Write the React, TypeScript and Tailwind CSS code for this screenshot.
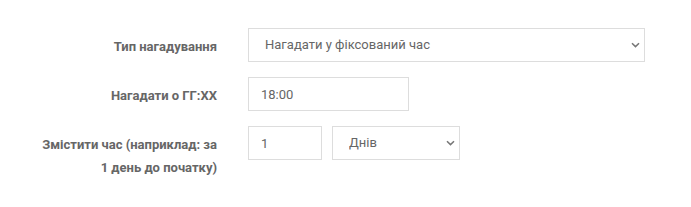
import { useState } from 'react'

function Chevron() {
  return (
    <svg
      width="9"
      height="6"
      viewBox="0 0 9 6"
      className="pointer-events-none absolute right-[5px] top-1/2 -translate-y-1/2"
      fill="none"
    >
      <path d="M1 1.2 4.5 4.6 8 1.2" stroke="#777" strokeWidth="1.5" />
    </svg>
  )
}

type SelectProps = {
  value: string
  options: string[]
  onChange: (v: string) => void
  className: string
}

function Select({ value, options, onChange, className }: SelectProps) {
  return (
    <div className={`relative ${className}`}>
      <select
        value={value}
        onChange={(e) => onChange(e.target.value)}
        className="h-[34px] w-full appearance-none border border-[#ddd] bg-white pl-[16px] pr-6 text-[13px] text-[#666] outline-none"
      >
        {options.map((o) => (
          <option key={o}>{o}</option>
        ))}
      </select>
      <Chevron />
    </div>
  )
}

export default function App() {
  const [type, setType] = useState('Нагадати у фіксований час')
  const [time, setTime] = useState('18:00')
  const [offset, setOffset] = useState('1')
  const [unit, setUnit] = useState('Днів')

  const labelCls = 'w-[217px] shrink-0 pt-[7px] text-right text-[13px] font-bold leading-[23px] text-[#666]'

  return (
    <div className="min-h-[207px] bg-white pt-[28px] font-['Roboto',sans-serif]">
      <div className="flex flex-col gap-[15px]">
        <div className="flex gap-[31px]">
          <label className={labelCls}>Тип нагадування</label>
          <Select
            value={type}
            onChange={setType}
            options={['Нагадати у фіксований час', 'Змістити час']}
            className="w-[397px]"
          />
        </div>

        <div className="flex gap-[31px]">
          <label className={labelCls}>Нагадати о ГГ:ХХ</label>
          <input
            type="text"
            value={time}
            onChange={(e) => setTime(e.target.value)}
            className="h-[34px] w-[161px] border border-[#ddd] px-[12px] text-[13px] text-[#666] outline-none"
          />
        </div>

        <div className="flex gap-[31px]">
          <label className={labelCls}>
            Змістити час (наприклад: за
            <br />1 день до початку)
          </label>
          <div className="flex items-start gap-[10px]">
            <input
              type="text"
              value={offset}
              onChange={(e) => setOffset(e.target.value)}
              className="h-[34px] w-[74px] border border-[#ddd] px-[12px] text-[13px] text-[#666] outline-none"
            />
            <Select value={unit} onChange={setUnit} options={['Хвилин', 'Годин', 'Днів']} className="w-[128px]" />
          </div>
        </div>
      </div>
    </div>
  )
}
